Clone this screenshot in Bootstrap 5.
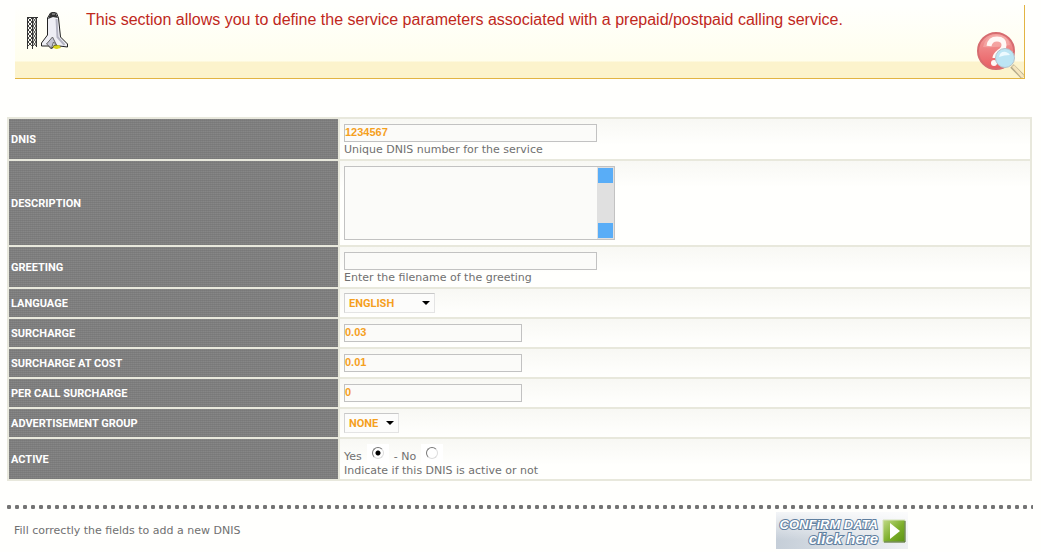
<!DOCTYPE html>
<html lang="en">
<head>
<meta charset="utf-8">
<meta name="viewport" content="width=device-width, initial-scale=1">
<title>Add DNIS</title>
<link href="https://cdn.jsdelivr.net/npm/bootstrap@5.3.0/dist/css/bootstrap.min.css" rel="stylesheet">
<style>
body { background: #fffffd; color: #707070; font: 11px/14px "DejaVu Sans", sans-serif; }
.intro {
  margin: 5px 16px 38px 15px; height: 74px;
  border-right: 1px solid #e2b443; border-bottom: 1px solid #e2b443;
  background: linear-gradient(#fffffd, #fffeed 56px, #fcf3cc 57px, #fcf3cc);
}
.intro-text { font: 16px/20px "Liberation Sans", Arial, sans-serif; color: #c0281c; padding: 5px 0 0 16px; }
.shuttle { margin: 5px 0 0 10px; }
.help-link { line-height: 0; }
.page-body { margin: 0 8px 0 7px; }
.dnis-form { width: calc(100% - 1px); border-collapse: collapse; }
.dnis-form th, .dnis-form td { border: 2px solid #e8e8dc; height: 30px; }
.dnis-form th {
  width: 331px; padding: 2px 2px 0; color: #fff; font: bold 11px/14px Roboto, "Liberation Sans", Arial, sans-serif;
  background: repeating-linear-gradient(90deg, transparent 0 1px, rgba(110,110,110,.2) 1px 2px), repeating-linear-gradient(#868686 0 1px, #7c7c7c 1px 2px);
}
.dnis-form td { padding: 0 4px; background: linear-gradient(#f8f8f4, #fffffd 26px); }
.dnis-form .tall-row > * { height: 42px; }
.dnis-form .tall-row > td { padding-top: 3px; }
.dnis-form .area-row > * { height: 86px; }
.field {
  display: block; height: 18px; width: 178px; padding: 0 0 2px; border: 1px solid #c2c2c2; border-radius: 0;
  background: #fbfbf9; color: #f5a01e; font: bold 11px/14px "Liberation Sans", Arial, sans-serif;
}
.field-wide { width: 253px; margin-bottom: 1px; }
.field-area {
  width: 271px; height: 74px; resize: none; overflow: hidden; padding: 1px 18px 1px 1px;
  background:
    linear-gradient(#59adf7, #59adf7) right 1px top 1px / 15px 15px no-repeat,
    linear-gradient(#59adf7, #59adf7) right 1px bottom 1px / 15px 15px no-repeat,
    linear-gradient(#e0e0e0, #e0e0e0) right 0 top 0 / 17px 100% no-repeat, #fbfbf9;
}
.field-select {
  appearance: none; height: 20px; width: 91px; padding: 1px 4px 0; border-color: #c8c8c8 #e4e4e4 #e4e4e4 #d4d4d4;
  font-family: Roboto, "Liberation Sans", Arial, sans-serif;
  background: url("data:image/svg+xml,%3Csvg xmlns='http://www.w3.org/2000/svg' width='8' height='4'%3E%3Cpath d='M0 0h8L4 4z'/%3E%3C/svg%3E") right 4px center / 8px 4px no-repeat, #fcfcfb;
}
.field-short { width: 55px; }
.choice {
  appearance: none; width: 12px; height: 12px; margin: 0; border-radius: 50%; background: #fff;
  border: 1px solid; border-color: #777 #ddd #ddd #777;
}
.choice:checked { background: radial-gradient(circle, #000 0 2px, #fff 3px); }
.choice-row { gap: 5px; }
.choice-box { background: #fff; padding: 3px 5px 5px; line-height: 0; }
.dots { height: 4px; margin: 24px 0 3px; background: radial-gradient(circle at 2px 2px, #747474 0 2px, transparent 2.4px) 0 0 / 8px 4px repeat-x; }
.footer-row { padding: 0 125px 0 7px; }
.confirm { line-height: 0; }
</style>
</head>
<body>
<header class="intro d-flex">
  <svg class="shuttle flex-shrink-0" width="45" height="42" viewBox="0 0 45 42" aria-hidden="true">
    <path d="M2.500 7v32M7.500 7v32M11.500 7v30M2 7.500h11" stroke="#333" fill="none"/>
    <path d="M3 8l4 4-4 4 4 4-4 4 4 4-4 4 4 4M7 8l-4 4 4 4-4 4 4 4-4 4 4 4-4 4M8 8l3 4-3 4 3 4-3 4 3 4-3 4 3 4M11 8l-3 4 3 4-3 4 3 4-3 4 3 4-3 4" stroke="#444" fill="none"/>
    <path d="M26 34l2 4 4 1 5-4z" fill="#d9d41c"/>
    <path d="M22.500 8v17l-6 8v3h7l3 3 3-4 5 1 8 1v-3l-7-7-2-19-2-5h-6z" fill="#eeeef4" stroke="#222"/>
    <path d="M31.500 9l1 18 7 8" stroke="#b4b4c2" stroke-width="2" fill="none"/>
    <path d="M23 9l2-5 2-2h3l3 6-5-1z" fill="#333"/><path d="M27 4h3" stroke="#bbb"/>
    <path d="M28 36l3 3 5-1-2-3z" fill="#d9d41c"/>
    <path d="M27.500 27l-6 7 5 4 2-6 3 3z" fill="#c5c5d3" stroke="#666"/>
  </svg>
  <div class="intro-text flex-grow-1">This section allows you to define the service parameters associated with a prepaid/postpaid calling service.</div>
  <a class="help-link align-self-end" href="#" aria-label="Help">
    <svg width="48" height="48" viewBox="0 0 48 48">
      <defs><linearGradient id="red" x2="0" y2="1"><stop stop-color="#f3a2a0"/><stop offset="1" stop-color="#e95c61"/></linearGradient></defs>
      <circle cx="20" cy="21" r="18" fill="url(#red)" stroke="#d66c70" stroke-width="2"/>
      <path d="M7 17Q10 5 21 5T34 15Q21 18 7 17" fill="#f7bab6" opacity=".5"/>
      <path d="M13 16q1-7 8-7t7 6q0 4-5 7-4 3-4 6" fill="none" stroke="#fff8f6" stroke-width="5"/><circle cx="18" cy="33" r="3" fill="#fff8f6"/>
      <path d="M36 36l11 11" stroke="#b5aa8a" stroke-width="5"/><path d="M37 36l10 11" stroke="#f5e5bd" stroke-width="3"/>
      <circle cx="29" cy="28" r="9.500" fill="#bce5f4" stroke="#b5c3cc" stroke-width="1"/><path d="M23 27q1-6 7-5 3 1 4 3-6 0-11 2" fill="#edfaff"/>
    </svg>
  </a>
</header>
<form class="page-body">
  <table class="dnis-form">
    <tr class="tall-row"><th scope="row"><label for="dnis">DNIS</label></th><td><input class="field field-wide" id="dnis" value="1234567">Unique DNIS number for the service</td></tr>
    <tr class="area-row"><th scope="row"><label for="description">DESCRIPTION</label></th><td><textarea class="field field-area" id="description"></textarea></td></tr>
    <tr class="tall-row"><th scope="row"><label for="greeting">GREETING</label></th><td><input class="field field-wide" id="greeting">Enter the filename of the greeting</td></tr>
    <tr><th scope="row"><label for="language">LANGUAGE</label></th><td><select class="field field-select" id="language"><option>ENGLISH</option></select></td></tr>
    <tr><th scope="row"><label for="surcharge">SURCHARGE</label></th><td><input class="field" id="surcharge" value="0.03"></td></tr>
    <tr><th scope="row"><label for="cost">SURCHARGE AT COST</label></th><td><input class="field" id="cost" value="0.01"></td></tr>
    <tr><th scope="row"><label for="percall">PER CALL SURCHARGE</label></th><td><input class="field" id="percall" value="0"></td></tr>
    <tr><th scope="row"><label for="adgroup">ADVERTISEMENT GROUP</label></th><td><select class="field field-select field-short" id="adgroup"><option>NONE</option></select></td></tr>
    <tr class="tall-row"><th scope="row">ACTIVE</th><td>
      <div class="choice-row d-flex align-items-end"><label for="yes">Yes</label><span class="choice-box"><input class="choice" type="radio" name="active" id="yes" checked></span><label for="no">- No</label><span class="choice-box"><input class="choice" type="radio" name="active" id="no"></span></div>
      Indicate if this DNIS is active or not</td></tr>
  </table>
  <div class="dots"></div>
  <div class="footer-row d-flex justify-content-between align-items-center">
    <span>Fill correctly the fields to add a new DNIS</span>
    <button class="confirm border-0 p-0 bg-transparent" type="submit" aria-label="Confirm data, click here">
      <svg width="132" height="37" viewBox="0 0 132 37">
        <defs><linearGradient id="plate" x2="1" y2="0"><stop stop-color="#c5ced8"/><stop offset="1" stop-color="#eef0f2"/></linearGradient>
        <linearGradient id="green" x2="1" y2="1"><stop stop-color="#c1da87"/><stop offset=".55" stop-color="#7cae2a"/><stop offset="1" stop-color="#5c9414"/></linearGradient>
        <linearGradient id="shine" x2="0" y2="1"><stop stop-color="#fff" stop-opacity=".8"/><stop offset="1" stop-color="#fff" stop-opacity="0"/></linearGradient></defs>
        <path d="M0 0h132v37H0z" fill="url(#plate)"/><path d="M0 0h132v28H0z" fill="url(#shine)"/>
        <g font-family="Liberation Sans, Arial, sans-serif" font-weight="bold" font-style="italic" fill="#fff" stroke="#5f7fa0" stroke-width="2" paint-order="stroke" text-anchor="end">
          <text x="102" y="17" font-size="13">CONFiRM DATA</text><text x="102" y="32" font-size="15">click here</text></g>
        <path d="M107 8h22v22h-22z" fill="url(#green)" stroke="#d5e2ba"/><path d="M108 30h21V9" fill="none" stroke="#49652a"/>
        <path d="M114 11l10 8-10 8z" fill="#fff"/>
      </svg>
    </button>
  </div>
</form>
<script src="https://cdn.jsdelivr.net/npm/bootstrap@5.3.0/dist/js/bootstrap.bundle.min.js"></script>
</body>
</html>
